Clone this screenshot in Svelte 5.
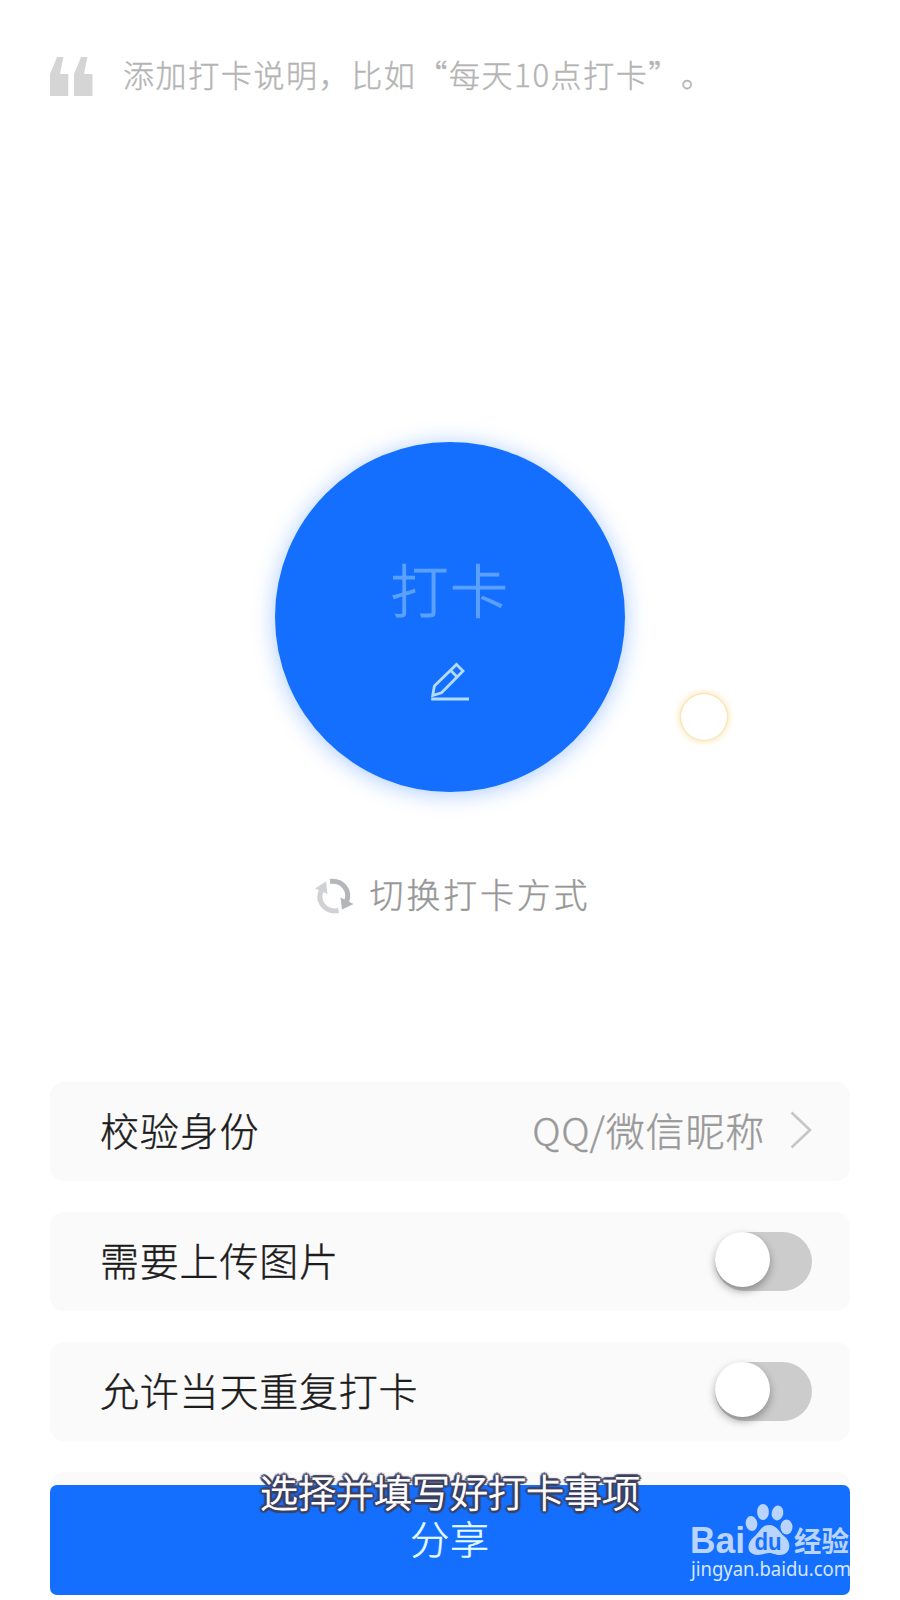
<script lang="ts">
    //#region <State>
    let description = '添加打卡说明，比如“每天10点打卡”。';
    let identity = 'QQ/微信昵称';

    let options = [
        { label: '需要上传图片', enabled: false },
        { label: '允许当天重复打卡', enabled: false },
    ];
    //#endregion </State>

    function uiOnToggleClicked(index: number) {
        options[index].enabled = !options[index].enabled;
    }
</script>


<!-- ######################################## -->
<!-- Render  -->
<!-- ######################################## -->
<div class="page">
    <header class="description">
        <svg class="quote" width="44" height="42" viewBox="0 0 44 42">
            <path d="M0 40V18L7 1H13.500L10 18H18.300V40ZM24 40V18L31 1H37.500L34 18H42.500V40Z" fill="#d5d5d5" />
        </svg>
        <span>{description}</span>
    </header>

    <main class="punch">
        <button class="punch-button">
            <span class="punch-title">打卡</span>
            <svg class="pencil" width="40" height="40" viewBox="0 0 40 40" fill="none" stroke="#b3dbff" stroke-width="2.800">
                <path d="M2.700 33.500L4.400 24L26.500 2.500L33 9L11.500 30.800ZM20.500 8.300L27.200 15" />
                <path d="M1.200 37H39" stroke-width="3.200" />
            </svg>
        </button>
        <button class="switch-mode">
            <svg width="40" height="38" viewBox="0 0 40 38" fill="none">
                <path d="M15 4.500C27 3 36 13 31.500 25" stroke="#b5b6ba" stroke-width="5" />
                <path d="M25.500 20.500L38.500 27L27 32.500Z" fill="#b5b6ba" />
                <path d="M23.500 33.500C11 36 1 25 6.500 13" stroke="#d0d1d4" stroke-width="5" />
                <path d="M0 11.500L11 4.500L12.500 17Z" fill="#d0d1d4" />
            </svg>
            <span>切换打卡方式</span>
        </button>
        <div class="touch-dot"></div>
    </main>

    <section class="settings">
        <div class="row">
            <span class="label">校验身份</span>
            <span class="value">
                <span class="label">{identity}</span>
                <svg width="22" height="38" viewBox="0 0 22 38" fill="none" stroke="#c6c6c6" stroke-width="2.600">
                    <path d="M1.500 1.500L20 19L1.500 36.500" />
                </svg>
            </span>
        </div>
        {#each options as option, i}
            <div class="row">
                <span class="label">{option.label}</span>
                <button class="toggle" class:on={option.enabled} aria-label={option.label}
                on:click={() => uiOnToggleClicked(i)}
                ><span class="knob"></span></button>
            </div>
        {/each}
        <div class="row"></div>
    </section>

    <footer class="share-bar">
        <button class="share">分享</button>
        <div class="caption">选择并填写好打卡事项</div>
        <!-- Logo -->
        <svg class="logo" width="164" height="84" viewBox="0 0 164 84">
            <g fill="#b9d4ff">
                <text class="brand" x="-1" y="50" font-size="36" textLength="55" lengthAdjust="spacingAndGlyphs">Bai</text>
                <ellipse cx="60.500" cy="20.500" rx="5.800" ry="7.500" transform="rotate(-8 60.500 20.500)" />
                <ellipse cx="72" cy="9" rx="5.900" ry="8" />
                <ellipse cx="86.500" cy="10" rx="5.800" ry="7.500" transform="rotate(12 86.500 10)" />
                <ellipse cx="95.500" cy="24" rx="6" ry="7.500" />
                <path d="M78 22C86 22 88 29 93 33C102 40 99 52 89 52C84 52 82 50 78 50C74 50 71 52 67 52C55 52 55 40 63 34C69 29 70 22 78 22Z" />
                <text class="brand-cn" x="103" y="49" font-size="28" textLength="55" lengthAdjust="spacingAndGlyphs">经验</text>
            </g>
            <text class="brand" x="63.500" y="47" font-size="23" fill="#146fff" textLength="27" lengthAdjust="spacingAndGlyphs">du</text>
            <text class="site" x="0" y="73" font-size="19" fill="#d5e6ff" textLength="160" lengthAdjust="spacingAndGlyphs">jingyan.baidu.com</text>
        </svg>
    </footer>
</div>

<style>
    :global(body) {
        background: #fff;
    }

    .page {
        display: flex;
        flex-direction: column;
        width: 900px;
        height: 1600px;
        padding: 0 50px;
        box-sizing: border-box;
        overflow: hidden;
        font-family: "Noto Sans CJK SC", "Noto Sans", sans-serif;
        font-weight: 300;
        color: #1c1c1c;
        text-spacing-trim: space-all;
        -webkit-text-stroke: 0.4px currentColor;
    }

    button {
        padding: 0;
        border: none;
        font: inherit;
        cursor: pointer;
    }

    .description {
        display: flex;
        align-items: center;
        gap: 29px;
        height: 154px;
        font-size: 31px;
        letter-spacing: 1.6px;
        color: #b4b4b4;
    }

    .description span {
        padding-bottom: 7px;
        white-space: nowrap;
    }

    .punch {
        position: relative;
        display: flex;
        flex-direction: column;
        align-items: center;
        height: 640px;
        padding-top: 288px;
    }

    .punch-button {
        display: flex;
        flex-direction: column;
        align-items: center;
        width: 350px;
        height: 350px;
        padding-top: 102px;
        box-sizing: border-box;
        border-radius: 50%;
        background: #146fff;
        box-shadow: 0 2px 22px rgba(20, 111, 255, 0.36);
    }

    .punch-title {
        font-size: 58px;
        line-height: 88px;
        letter-spacing: 1.5px;
        color: #5ba1ff;
        -webkit-text-stroke: 1px #5ba1ff;
    }

    .pencil {
        margin-top: 30px;
    }

    .switch-mode {
        display: flex;
        align-items: center;
        gap: 15px;
        height: 60px;
        margin-top: 74px;
        padding-left: 5px;
        background: none;
        font-size: 34px;
        letter-spacing: 2.8px;
        color: #979797;
    }

    .switch-mode span {
        padding-bottom: 6px;
    }

    .touch-dot {
        position: absolute;
        left: 631px;
        top: 540px;
        width: 46px;
        height: 46px;
        border-radius: 50%;
        background: #fff;
        box-shadow: 0 0 2px #e5c98b, 0 0 7px 1px #ffdf9f;
    }

    .settings {
        display: flex;
        flex-direction: column;
        gap: 31px;
        height: 403px;
    }

    .row {
        display: flex;
        align-items: center;
        justify-content: space-between;
        flex: none;
        height: 99px;
        padding: 0 38px 0 50px;
        box-sizing: border-box;
        border-radius: 14px;
        background: #fafafa;
        font-size: 39px;
        letter-spacing: 0.8px;
    }

    .label {
        padding-bottom: 6px;
    }

    .value {
        display: flex;
        align-items: center;
        gap: 25px;
        margin-top: -3px;
        color: #999;
    }

    .value .label {
        padding-bottom: 3px;
    }

    .toggle {
        display: flex;
        width: 97px;
        height: 59px;
        border-radius: 30px;
        background: #ccc;
    }

    .toggle.on {
        justify-content: flex-end;
        background: #146fff;
    }

    .knob {
        width: 55px;
        height: 55px;
        border-radius: 50%;
        background: #fff;
        box-shadow: 0 4px 9px rgba(0, 0, 0, 0.33);
    }

    .share-bar {
        position: relative;
        flex: none;
        height: 110px;
    }

    .share {
        display: block;
        width: 100%;
        height: 110px;
        padding-bottom: 6px;
        border-radius: 7px;
        background: #146fff;
        font-size: 39px;
        letter-spacing: 0.8px;
        color: #e4fbff;
        -webkit-text-stroke: 0.5px #e4fbff;
    }

    .caption {
        position: absolute;
        top: -22px;
        left: 0;
        width: 100%;
        text-align: center;
        font-size: 38px;
        line-height: 56px;
        color: #fff;
        -webkit-text-stroke: 0.8px #fff;
        /* Round outline, drawn as a ring of offsets */
        text-shadow: 3px 0 1px #3d405f, -3px 0 1px #3d405f, 0 3px 1px #3d405f, 0 -3px 1px #3d405f,
            2px 2px 1px #3d405f, -2px 2px 1px #3d405f, 2px -2px 1px #3d405f, -2px -2px 1px #3d405f;
        pointer-events: none;
    }

    .logo {
        position: absolute;
        right: -5px;
        top: 18px;
        overflow: visible;
        -webkit-text-stroke: 0;
    }

    .brand {
        font-family: "Liberation Sans", sans-serif;
        font-weight: 700;
    }

    .brand-cn {
        font-weight: 700;
    }

    .site {
        font-family: "Noto Sans", sans-serif;
        font-weight: 400;
    }
</style>
